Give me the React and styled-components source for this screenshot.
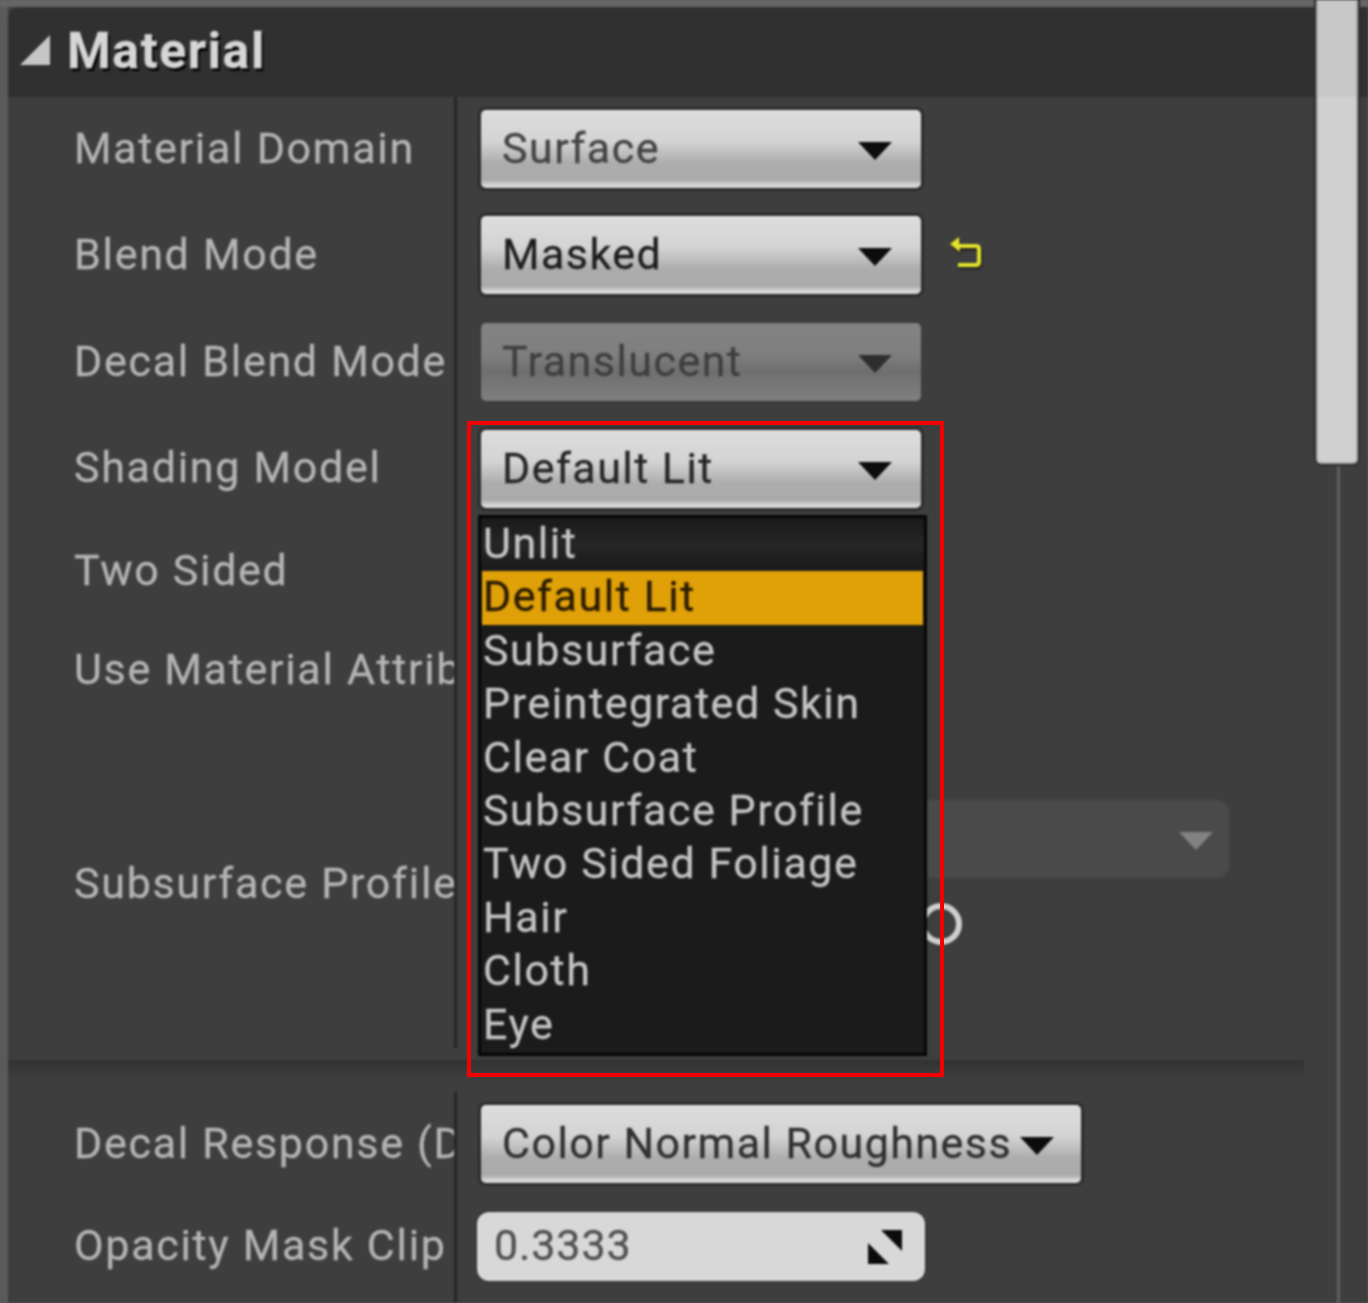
import React from "react";
import styled, { createGlobalStyle, css } from "styled-components";

const Global = createGlobalStyle`
  html, body { margin: 0; padding: 0; background: #3e3e3e; }
  * { box-sizing: border-box; }
`;

const Page = styled.div`
  position: relative;
  width: 1368px;
  height: 1303px;
  overflow: hidden;
  background: #5a5a5a;
  font-family: Roboto, "Liberation Sans", sans-serif;
`;
const Canvas = styled.div`
  position: relative;
  width: 100%;
  height: 100%;
  -webkit-text-stroke: 0.3px;
  filter: blur(1px);
`;
const TopStrip = styled.div`
  height: 7px;
  background: #666;
`;
const Panel = styled.div`
  margin-left: 8px;
  height: 1296px;
  background: #3e3e3e;
  display: flex;
  flex-direction: column;
`;
const Header = styled.div`
  height: 90px;
  flex: none;
  background: #303030;
  border-top-left-radius: 12px;
  display: flex;
  align-items: center;
  gap: 17px;
  padding-left: 12px;
  padding-bottom: 5px;
`;
const Title = styled.div`
  font-size: 50px;
  font-weight: 700;
  letter-spacing: 1.6px;
  color: #d6d6d6;
  text-shadow: 2px 3px 1px #000;
  line-height: 1;
  margin-top: 3px;
`;
const Section = styled.div`
  flex: none;
  display: flex;
  flex-direction: column;
`;
const Row = styled.div`
  display: grid;
  grid-template-columns: 446px 1fr;
  height: ${(p) => p.$h}px;
`;
const Label = styled.div`
  padding-left: 66px;
  padding-bottom: ${(p) => p.$pb ?? 2}px;
  align-self: center;
  font-size: 43px;
  letter-spacing: 1.7px;
  line-height: 50px;
  color: #b4b4b4;
  white-space: nowrap;
  overflow: hidden;
`;
const Value = styled.div`
  border-left: 3px solid #262626;
  padding-left: ${(p) => p.$pl ?? 24}px;
  padding-top: ${(p) => p.$pt ?? 0}px;
  padding-bottom: ${(p) => p.$pb ?? 0}px;
  display: flex;
  flex-direction: ${(p) => (p.$column ? "column" : "row")};
  align-items: ${(p) => (p.$column ? "flex-start" : "center")};
  gap: ${(p) => (p.$column ? 25 : 28)}px;
`;
const Select = styled.div`
  width: ${(p) => p.$w || 440}px;
  height: 78px;
  flex: none;
  border-radius: 5px;
  display: flex;
  align-items: center;
  justify-content: space-between;
  padding: 0 ${(p) => p.$pr ?? 29}px 2px 21px;
  font-size: 43px;
  letter-spacing: 1.45px;
  color: ${(p) => p.$ink || "#333"};
  box-shadow: 0 0 0 3px #2c2c2c;
  background: linear-gradient(
    #e8e8e8 0,
    #dcdcdc 4%,
    #d4d4d4 40%,
    #adadad 68%,
    #aaa 90%,
    #d6d6d6 96%,
    #dadada 100%
  );
  ${(p) =>
    p.$disabled &&
    css`
      color: #3f3f3f;
      box-shadow: 0 0 0 1px #383838;
      background: linear-gradient(#838383 0, #7f7f7f 40%, #6f6f6f 62%, #7c7c7c 92%, #808080 100%);
    `}
  ${(p) =>
    p.$ghost &&
    css`
      box-shadow: none;
      background: #4a4a4a;
      border-radius: 12px;
      justify-content: flex-end;
      padding-right: 16px;
    `}
`;
const Arrow = styled.span`
  flex: none;
  width: 0;
  height: 0;
  border-left: 17px solid transparent;
  border-right: 17px solid transparent;
  border-top: 18px solid ${(p) => p.$c || "#0c0c0c"};
  margin-top: 6px;
`;
const Reset = styled.svg`
  width: 34px;
  height: 32px;
  flex: none;
  margin-top: -4px;
  filter: drop-shadow(1px 2px 1px #1c1c1c);
`;
const Ring = styled.div`
  width: 42px;
  height: 42px;
  margin-left: 439px;
  border-radius: 50%;
  border: 6px solid #cfcfcf;
`;
const Divider = styled.div`
  height: 44px;
  flex: none;
  padding-top: 12px;
`;
const DividerLine = styled.div`
  width: 1296px;
  height: 18px;
  background: linear-gradient(#323232, #3e3e3e);
`;
const NumberBox = styled.div`
  width: 448px;
  height: 69px;
  border-radius: 12px;
  background: #d8d8d8;
  box-shadow: 0 0 0 1px #2e2e2e;
  display: flex;
  align-items: center;
  justify-content: space-between;
  padding: 0 23px 3px 17px;
  font-size: 43px;
  letter-spacing: 0.9px;
  color: #505050;
`;
const Grip = styled.svg`
  width: 34px;
  height: 34px;
  flex: none;
  margin-top: 3px;
`;
const Thumb = styled.div`
  position: absolute;
  left: 1316px;
  top: 0;
  width: 42px;
  height: 464px;
  background: #d0d0d0;
  border-radius: 0 0 5px 5px;
  border: 2px solid #a8a8a8;
  border-top: 0;
  box-shadow: 0 0 0 2px #2c2c2c;
`;
const ThumbShade = styled.div`
  height: 97px;
  background: #c8c8c8;
`;
const Track = styled.div`
  position: absolute;
  left: 1337px;
  top: 466px;
  width: 3px;
  bottom: 0;
  background: #5f5f5f;
`;
const Menu = styled.div`
  position: absolute;
  left: 478px;
  top: 515px;
  width: 449px;
  height: 541px;
  border: 3px solid #050505;
  background: linear-gradient(#1a1a1a 0, #262626 5%, #1b1b1b 9%, #1b1b1b 100%);
  padding: 0 1px;
`;
const Item = styled.div`
  height: 53.4px;
  line-height: 51px;
  padding-left: 1px;
  font-size: 43px;
  letter-spacing: 1.55px;
  color: ${(p) => (p.$active ? "#2a1c00" : "#c4c4c4")};
  background: ${(p) => (p.$active ? "#e0a008" : "transparent")};
  white-space: nowrap;
`;
const Highlight = styled.div`
  position: absolute;
  left: 467px;
  top: 421px;
  width: 477px;
  height: 656px;
  border: 4px solid #f40000;
  filter: blur(0.4px);
  pointer-events: none;
`;

const ITEMS = [
  "Unlit",
  "Default Lit",
  "Subsurface",
  "Preintegrated Skin",
  "Clear Coat",
  "Subsurface Profile",
  "Two Sided Foliage",
  "Hair",
  "Cloth",
  "Eye",
];

export default function App() {
  return (
    <Page>
      <Global />
      <Canvas>
        <TopStrip />
        <Panel>
          <Header>
            <svg width="30" height="30" viewBox="0 0 30 30" style={{ flex: "none" }}>
              <polygon points="30,0 30,30 0,30" fill="#c6c6c6" />
            </svg>
            <Title>Material</Title>
          </Header>
          <Section>
            <Row $h={104}>
              <Label>Material Domain</Label>
              <Value>
                <Select $ink="#444">
                  Surface
                  <Arrow />
                </Select>
              </Value>
            </Row>
            <Row $h={107}>
              <Label>Blend Mode</Label>
              <Value>
                <Select $ink="#1e1e1e">
                  Masked
                  <Arrow />
                </Select>
                <Reset viewBox="0 0 34 32">
                  <path
                    d="M10 9 H27 Q30 9 30 12 V25 Q30 28 27 28 H9"
                    fill="none"
                    stroke="#e4e42c"
                    strokeWidth="4"
                  />
                  <polygon points="1,7 10,0 11,15" fill="#e4e42c" />
                </Reset>
              </Value>
            </Row>
            <Row $h={107}>
              <Label>Decal Blend Mode</Label>
              <Value>
                <Select $disabled>
                  Translucent
                  <Arrow $c="#2e2e2e" />
                </Select>
              </Value>
            </Row>
            <Row $h={105}>
              <Label>Shading Model</Label>
              <Value $pt={2}>
                <Select $ink="#262626">
                  Default Lit
                  <Arrow />
                </Select>
              </Value>
            </Row>
            <Row $h={100}>
              <Label $pb={0}>Two Sided</Label>
              <Value />
            </Row>
            <Row $h={98}>
              <Label $pb={0}>Use Material Attributes</Label>
              <Value />
            </Row>
            <Row $h={330}>
              <Label $pb={0}>Subsurface Profile</Label>
              <Value $column $pt={82}>
                <Select $ghost $w={748}>
                  <Arrow $c="#828282" />
                </Select>
                <Ring />
              </Value>
            </Row>
          </Section>
          <Divider>
            <DividerLine />
          </Divider>
          <Section>
            <Row $h={103}>
              <Label>Decal Response (DBuffer)</Label>
              <Value>
                <Select $w={600} $pr={27} $ink="#303030">
                  Color Normal Roughness
                  <Arrow />
                </Select>
              </Value>
            </Row>
            <Row $h={108}>
              <Label $pb={8}>Opacity Mask Clip Value</Label>
              <Value $pl={20} $pb={5}>
                <NumberBox>
                  0.3333
                  <Grip viewBox="0 0 34 34">
                    <polygon points="13,0 34,0 34,21" fill="#0c0c0c" />
                    <polygon points="0,13 0,34 21,34" fill="#0c0c0c" />
                  </Grip>
                </NumberBox>
              </Value>
            </Row>
          </Section>
        </Panel>
        <Track />
        <Thumb>
          <ThumbShade />
        </Thumb>
        <Menu>
          {ITEMS.map((t) => (
            <Item key={t} $active={t === "Default Lit"}>
              {t}
            </Item>
          ))}
        </Menu>
      </Canvas>
      <Highlight />
    </Page>
  );
}
